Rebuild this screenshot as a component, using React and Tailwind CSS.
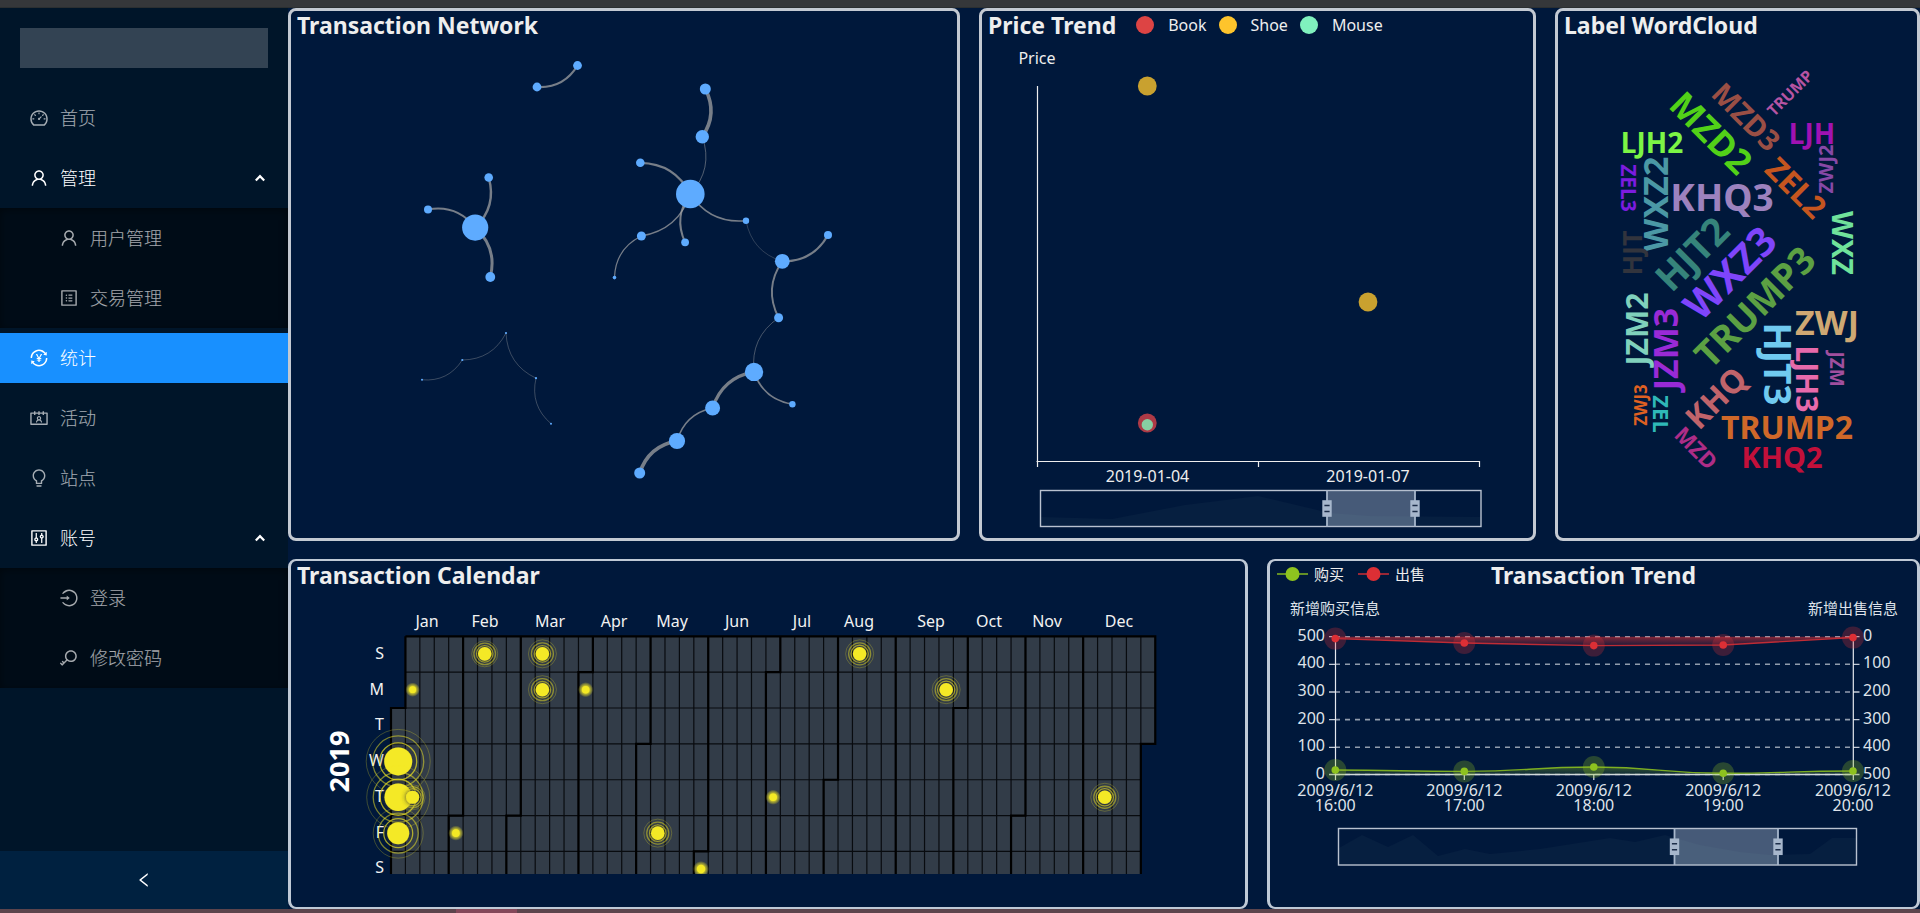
import React from "react";
import {
  AiOutlineDashboard,
  AiOutlineUser,
  AiOutlineProfile,
  AiOutlineTransaction,
  AiOutlineContacts,
  AiOutlineBulb,
  AiOutlineControl,
  AiOutlineLogin,
  AiOutlineKey,
  AiOutlineLeft,
} from "react-icons/ai";

/* ---------- Sidebar ---------- */

const MENU = [
  { label: "首页", icon: AiOutlineDashboard },
  {
    label: "管理",
    icon: AiOutlineUser,
    children: [
      { label: "用户管理", icon: AiOutlineUser },
      { label: "交易管理", icon: AiOutlineProfile },
    ],
  },
  { label: "统计", icon: AiOutlineTransaction, active: true },
  { label: "活动", icon: AiOutlineContacts },
  { label: "站点", icon: AiOutlineBulb },
  {
    label: "账号",
    icon: AiOutlineControl,
    children: [
      { label: "登录", icon: AiOutlineLogin },
      { label: "修改密码", icon: AiOutlineKey },
    ],
  },
];

function MenuLink({ item, nested }) {
  const Icon = item.icon;
  const tone = item.active ? "bg-[#1890ff] text-white" : "text-white/65";
  return (
    <a
      href="#"
      aria-current={item.active ? "page" : undefined}
      className={`my-[5px] flex h-[50px] items-center gap-[11px] ${nested ? "pl-[59px]" : "pl-[29px]"} ${tone}`}
    >
      <Icon className="size-5" />
      <span>{item.label}</span>
    </a>
  );
}

function SubMenu({ item }) {
  const Icon = item.icon;
  return (
    <>
      <button
        type="button"
        aria-expanded="true"
        className="flex h-[60px] w-full items-center gap-[11px] pr-[23px] pl-[29px] text-white"
      >
        <Icon className="size-5" />
        <span className="flex-1 text-left">{item.label}</span>
        <svg className="h-2 w-[10px]" viewBox="0 0 10 8" fill="none" stroke="currentColor" strokeWidth="2.2">
          <path d="M0.8 6.6 5 2.2 9.2 6.6" />
        </svg>
      </button>
      <ul className="bg-[#000c17] shadow-[inset_0_2px_8px_rgba(0,0,0,0.45)]">
        {item.children.map((c) => (
          <li key={c.label} className="flow-root">
            <MenuLink item={c} nested />
          </li>
        ))}
      </ul>
    </>
  );
}

function Sidebar() {
  return (
    <aside className="flex w-72 shrink-0 flex-col bg-[#001529]">
      <div className="m-5 h-10 bg-white/20" />
      <nav className="flex-1 text-lg font-light">
        <ul>
          {MENU.map((item) => (
            <li key={item.label} className="flow-root">
              {item.children ? <SubMenu item={item} /> : <MenuLink item={item} />}
            </li>
          ))}
        </ul>
      </nav>
      <button
        type="button"
        aria-label="Collapse menu"
        className="flex h-[58px] items-center justify-center bg-[#002140] text-white"
      >
        <AiOutlineLeft className="size-[18px]" />
      </button>
    </aside>
  );
}

/* ---------- Shared pieces ---------- */

function Title({ children }) {
  return <h2 className="text-[23px] leading-7 font-bold text-[#eeeeee]">{children}</h2>;
}

function Chart({ box, label, children }) {
  return (
    <svg className="block h-auto w-full" viewBox={box} role="img" aria-label={label}>
      {children}
    </svg>
  );
}

function ZoomBar({ x1, x2, from, to, top, bottom, area }) {
  const mid = (top + bottom) / 2;
  return (
    <g>
      <polygon points={area} fill="#061f40" />
      <rect x={x1} y={top} width={x2 - x1} height={bottom - top} fill="none" stroke="#b9c2d0" strokeWidth="1.4" />
      <rect x={from} y={top} width={to - from} height={bottom - top} fill="#a7b7cc" fillOpacity="0.42" />
      {[from, to].map((x) => (
        <g key={x}>
          <path d={`M${x} ${top}V${bottom}`} stroke="#a7b7cc" strokeWidth="1.8" />
          <rect x={x - 4.7} y={mid - 8.3} width="9.4" height="16.6" fill="#a7b7cc" />
          <path d={`M${x - 2.6} ${mid - 3}h5.2M${x - 2.6} ${mid + 3}h5.2`} stroke="#1c2d48" strokeWidth="1.3" />
        </g>
      ))}
    </g>
  );
}

/* ---------- Transaction Network ---------- */

const NODES = {
  a: [537, 87, 4.4], b: [577.5, 65.5, 4.4],
  c: [475.2, 227.6, 13.1], d: [428, 209.5, 4], e: [488.7, 177.5, 4.3], f: [490.3, 277, 4.9],
  g: [506, 333, 1.1], h: [462.3, 360, 1.1], i: [422, 379.8, 1], j: [536, 378.2, 1.1], k: [551, 423.7, 1],
  l: [705.3, 89, 5.5], m: [702.3, 136.7, 6.7], n: [640.3, 162.8, 4.3], o: [690.3, 194, 14.3],
  p: [746, 220.7, 3.2], q: [641.4, 236, 4.5], r: [685.1, 242.3, 3.9], s: [614.5, 277.6, 1.8],
  t: [828, 235, 4], u: [782.3, 261.3, 7.4], v: [778.6, 317.8, 4.5], w: [754, 371.9, 9.2],
  x: [792.4, 404.2, 3.2], y: [712.6, 408, 7.5], z: [677, 441, 8.1], aa: [639.7, 473, 5.5],
};

const LINKS = [
  ["b", "a", 2.2], ["d", "c", 2], ["e", "c", 2.4], ["c", "f", 3],
  ["g", "h", 0.5], ["h", "i", 0.5], ["j", "g", 0.5], ["k", "j", 0.5],
  ["l", "m", 3.6], ["m", "o", 0.7], ["n", "o", 2.2], ["p", "o", 1.5], ["o", "q", 1.3],
  ["r", "o", 2], ["s", "q", 1.2], ["u", "p", 0.4], ["t", "u", 2.2], ["v", "u", 1.9],
  ["w", "v", 0.6], ["x", "w", 1.7], ["y", "w", 3.2], ["z", "y", 1.6], ["aa", "z", 3.8],
];

function arc([x1, y1], [x2, y2]) {
  const cx = (x1 + x2) / 2 + (y2 - y1) * 0.3;
  const cy = (y1 + y2) / 2 - (x2 - x1) * 0.3;
  return `M${x1} ${y1}Q${cx} ${cy} ${x2} ${y2}`;
}

function NetworkChart() {
  return (
    <Chart box="291 41 666 497" label="Transaction Network">
      {LINKS.map(([s, t, w]) => (
        <path key={s + t} d={arc(NODES[s], NODES[t])} fill="none" stroke="#aaaaaa" strokeOpacity="0.7" strokeWidth={w} />
      ))}
      {Object.entries(NODES).map(([id, [x, y, r]]) => (
        <circle key={id} cx={x} cy={y} r={r} fill="#5eabff" />
      ))}
    </Chart>
  );
}

/* ---------- Price Trend ---------- */

const PRICE_LEGEND = [
  ["Book", "bg-[#dd4444]"],
  ["Shoe", "bg-[#fec42c]"],
  ["Mouse", "bg-[#80f1be]"],
];

function PriceChart() {
  return (
    <Chart box="982 41 551 497" label="Price Trend">
      <g fill="#eeeeee" fontSize="16" textAnchor="middle">
        <text x="1037" y="64">Price</text>
        <text x="1147.5" y="482">2019-01-04</text>
        <text x="1368" y="482">2019-01-07</text>
      </g>
      <path d="M1037.5 86V467M1036.5 461.5H1479.5V467M1258.5 461.5V467" fill="none" stroke="#eeeeee" strokeWidth="1.2" />
      <circle cx="1147.3" cy="86" r="9.4" fill="#c9a12f" />
      <circle cx="1368" cy="302" r="9.4" fill="#c9a12f" />
      <circle cx="1147.3" cy="423" r="9.4" fill="#ad3a46" />
      <circle cx="1147.3" cy="424.8" r="5.7" fill="#87cfa2" />
      <ZoomBar
        x1={1040.5}
        x2={1481}
        from={1327}
        to={1415}
        top={490.5}
        bottom={526.5}
        area="1041,517 1112,519 1185,505 1258,496 1330,513 1370,516 1481,517 1481,526 1041,526"
      />
    </Chart>
  );
}

/* ---------- Label WordCloud ---------- */

const WORDS = [
  ["MZD2", 1711, 133, 35, 45, "#52d118"],
  ["MZD3", 1746, 117, 29, 45, "#9a4f45"],
  ["TRUMP", 1790, 93, 16, -45, "#b654a2"],
  ["LJH", 1812, 134, 28, 0, "#a012b2"],
  ["ZWJ2", 1826, 169, 20, -90, "#8748a6"],
  ["ZEL2", 1796, 188, 31, 45, "#c5551f"],
  ["LJH2", 1652, 143, 28, 0, "#7cf545"],
  ["KHQ3", 1722, 198, 37, 0, "#9d82be"],
  ["WXZ2", 1656, 204, 34, -90, "#4b98a5"],
  ["ZEL3", 1628, 188, 21, 90, "#7c1ce0"],
  ["HJT2", 1692, 254, 38, -45, "#36847b"],
  ["WXZ3", 1730, 273, 40, -45, "#7f45fb"],
  ["TRUMP3", 1755, 307, 37, -45, "#5ca043"],
  ["WXZ", 1842, 243, 29, 90, "#70e29b"],
  ["HJT", 1632, 253, 27, -90, "#32343d"],
  ["JZM2", 1637, 329, 30, -90, "#80d1bc"],
  ["JZM3", 1666, 349, 34, -90, "#992ad6"],
  ["ZWJ", 1827, 323, 34, 0, "#cfa873"],
  ["HJT3", 1777, 364, 37, 90, "#70caf0"],
  ["LJH3", 1807, 379, 30, 90, "#e76aab"],
  ["JZM", 1837, 369, 19, 90, "#a14f9e"],
  ["ZWJ3", 1641, 405, 17, -90, "#de6022"],
  ["ZEL", 1661, 414, 22, 90, "#2fb8b8"],
  ["KHQ", 1716, 398, 32, -45, "#c0646b"],
  ["MZD", 1696, 448, 22, 45, "#ad2d87"],
  ["TRUMP2", 1787, 428, 32, 0, "#cf6829"],
  ["KHQ2", 1782, 458, 29, 0, "#c2103a"],
];

function WordCloud() {
  return (
    <Chart box="1558 41 359 497" label="Label WordCloud">
      {WORDS.map(([word, x, y, size, angle, color]) => (
        <text
          key={word}
          transform={`translate(${x} ${y}) rotate(${angle})`}
          dy="0.357em"
          fontSize={size}
          fontWeight="700"
          fill={color}
          textAnchor="middle"
        >
          {word}
        </text>
      ))}
    </Chart>
  );
}

/* ---------- Transaction Calendar ---------- */

const CAL = { left: 391, top: 636.3, w: 14.42, h: 35.86, bottom: 874 };
const colX = (c) => CAL.left + c * CAL.w;
const rowY = (r) => CAL.top + r * CAL.h;
const START_ROW = 2;
const MONTH_DAYS = [31, 28, 31, 30, 31, 30, 31, 31, 30, 31, 30, 31];
const MONTHS = [
  ["Jan", 427], ["Feb", 485], ["Mar", 550], ["Apr", 614], ["May", 672], ["Jun", 737],
  ["Jul", 802], ["Aug", 859], ["Sep", 931], ["Oct", 989], ["Nov", 1047], ["Dec", 1119],
];
const WEEKDAYS = ["S", "M", "T", "W", "T", "F", "S"];

/* [column, row, radius, ring radii] */
const DEALS = [
  [0, 3, 14, [18.5, 25.5, 32]],
  [0, 4, 13.7, [18, 25, 31.5]],
  [1, 4, 6.6, [8.5, 10.5, 12.5]],
  [0, 5, 11, [14.5, 20, 25]],
  [1, 1, 3.4, []],
  [6, 0, 6.8, [8.2, 10.8, 13]],
  [10, 0, 6.8, [8.2, 11, 14]],
  [10, 1, 6.8, [8.2, 11, 14]],
  [13, 1, 3.8, []],
  [4, 5, 3.8, []],
  [18, 5, 6.8, [8.2, 11, 14]],
  [21, 6, 4.2, []],
  [26, 4, 3.8, []],
  [32, 0, 6.8, [8.6, 11, 14]],
  [38, 1, 6.8, [8.6, 11, 14]],
  [49, 4, 6.8, [8.6, 11, 14]],
];

function monthLines() {
  const out = [];
  let day = START_ROW;
  MONTH_DAYS.forEach((n) => {
    const c = Math.floor(day / 7);
    const r = day % 7;
    out.push(
      r === 0
        ? `M${colX(c)} ${rowY(0)}V${rowY(7)}`
        : `M${colX(c)} ${rowY(7)}V${rowY(r)}H${colX(c + 1)}V${rowY(0)}`
    );
    day += n;
  });
  out.push(`M${colX(1)} ${rowY(0)}H${colX(53)}V${rowY(3)}H${colX(52)}V${rowY(7)}`);
  return out.join("");
}

function CalendarChart() {
  const outline = `M${colX(0)} ${rowY(2)}H${colX(1)}V${rowY(0)}H${colX(53)}V${rowY(3)}H${colX(52)}V${rowY(7)}H${colX(0)}Z`;
  return (
    <Chart box="291 591 954 316" label="Transaction Calendar">
      <defs>
        <clipPath id="cal-outline">
          <path d={outline} />
        </clipPath>
        <clipPath id="cal-canvas">
          <rect x="291" y="591" width="954" height={CAL.bottom - 591} />
        </clipPath>
        <filter id="dot-shadow" x="-60%" y="-60%" width="220%" height="220%">
          <feDropShadow dx="0" dy="0" stdDeviation="2.4" floodColor="#333333" floodOpacity="1" />
        </filter>
        <radialGradient id="dot-glow">
          <stop offset="0.4" stopColor="#f4e925" stopOpacity="0.9" />
          <stop offset="0.75" stopColor="#f4e925" stopOpacity="0.4" />
          <stop offset="1" stopColor="#f4e925" stopOpacity="0" />
        </radialGradient>
      </defs>
      <g clipPath="url(#cal-canvas)">
        <path d={outline} fill="#323c48" />
        <g clipPath="url(#cal-outline)" stroke="#080b0f" strokeWidth="1.2">
          {Array.from({ length: 53 }, (_, c) => (
            <path key={`c${c}`} d={`M${colX(c)} ${rowY(0)}V${rowY(7)}`} />
          ))}
          {Array.from({ length: 7 }, (_, r) => (
            <path key={`r${r}`} d={`M${colX(0)} ${rowY(r)}H${colX(53)}`} />
          ))}
        </g>
        <path d={monthLines()} fill="none" stroke="#000000" strokeWidth="2.2" />
      </g>
      <g fill="#f2f2f2" fontSize="16" textAnchor="middle">
        {MONTHS.map(([m, x]) => (
          <text key={m} x={x} y="627">{m}</text>
        ))}
      </g>
      <g fill="#f2f2f2" fontSize="16" textAnchor="end">
        {WEEKDAYS.map((d, i) => (
          <text key={i} x="384" y={659 + i * 35.7}>{d}</text>
        ))}
      </g>
      <text transform="translate(339 761.5) rotate(-90)" dy="0.357em" fontSize="27" fontWeight="700" fill="#ffffff" textAnchor="middle">
        2019
      </text>
      <g clipPath="url(#cal-canvas)">
        {DEALS.map(([c, r, size, rings]) => {
          const x = colX(c + 0.5);
          const y = rowY(r + 0.5) - 0.4;
          return (
            <g key={`${c}-${r}`}>
              {rings.map((ring, i) => (
                <circle
                  key={ring}
                  cx={x}
                  cy={y}
                  r={ring}
                  fill="none"
                  stroke="#f4e925"
                  strokeWidth={i === 2 ? 1 : 1.3}
                  strokeOpacity={[0.7, 0.5, 0.25][i]}
                />
              ))}
              {rings.length === 0 && <circle cx={x} cy={y} r={size + 3.8} fill="url(#dot-glow)" />}
              <circle cx={x} cy={y} r={size} fill="#f4e925" filter={size > 5 ? "url(#dot-shadow)" : undefined} />
            </g>
          );
        })}
      </g>
    </Chart>
  );
}

/* ---------- Transaction Trend ---------- */

const TREND_X = [1335.3, 1464.3, 1593.8, 1723.2, 1853];
const SELL_Y = [638.6, 643, 645.6, 645, 637.6];
const BUY_Y = [770, 771.4, 767, 773.3, 771];
const GRID_Y = [636.7, 664.3, 692, 719.6, 747.3, 774.5];
const HOURS = ["16:00", "17:00", "18:00", "19:00", "20:00"];

function smooth(xs, ys) {
  let d = `M${xs[0]} ${ys[0]}`;
  for (let i = 1; i < xs.length; i++) {
    const m = (xs[i - 1] + xs[i]) / 2;
    d += `C${m} ${ys[i - 1]} ${m} ${ys[i]} ${xs[i]} ${ys[i]}`;
  }
  return d;
}

function Series({ ys, color, base, area, curved }) {
  const line = curved
    ? smooth(TREND_X, ys)
    : "M" + TREND_X.map((x, i) => `${x} ${ys[i]}`).join("L");
  return (
    <g>
      <path d={`${line}V${base}H${TREND_X[0]}Z`} fill={area} />
      <path d={line} fill="none" stroke={color} strokeWidth="1.4" strokeOpacity="0.85" />
      {TREND_X.map((x, i) => (
        <g key={x} fill={color}>
          <circle cx={x} cy={ys[i]} r="11" fillOpacity="0.28" />
          <circle cx={x} cy={ys[i]} r="3.8" />
        </g>
      ))}
    </g>
  );
}

function TrendChart() {
  return (
    <Chart box="1270 591 647 316" label="Transaction Trend">
      <defs>
        <linearGradient id="sell-area" x1="0" y1="0" x2="0" y2="1">
          <stop offset="0" stopColor="#dc2f35" stopOpacity="0.6" />
          <stop offset="1" stopColor="#dc2f35" stopOpacity="0.12" />
        </linearGradient>
        <linearGradient id="buy-area" x1="0" y1="0" x2="0" y2="1">
          <stop offset="0" stopColor="#8ec31f" stopOpacity="0.35" />
          <stop offset="1" stopColor="#8ec31f" stopOpacity="0.1" />
        </linearGradient>
      </defs>
      <g fill="#dfe3ea" fontSize="15" textAnchor="middle">
        <text x="1335" y="614">新增购买信息</text>
        <text x="1853" y="614">新增出售信息</text>
      </g>
      <g fill="#dfe3ea" fontSize="16" textAnchor="middle">
        {TREND_X.map((x, i) => (
          <text key={x} y="796">
            <tspan x={x}>2009/6/12</tspan>
            <tspan x={x} dy="15">{HOURS[i]}</tspan>
          </text>
        ))}
      </g>
      <g fill="#dfe3ea" fontSize="16">
        {GRID_Y.map((y, i) => (
          <g key={y}>
            <text x="1325" y={y + 4} textAnchor="end">{500 - i * 100}</text>
            <text x="1863" y={y + 4}>{i * 100}</text>
          </g>
        ))}
      </g>
      {GRID_Y.map((y) => (
        <g key={y} fill="none" stroke="#c3cad6">
          <path d={`M1335 ${y}H1853`} strokeWidth="1.6" strokeDasharray="5 5" strokeOpacity="0.75" />
          <path d={`M1329 ${y}h6.5M1853 ${y}h6.5`} strokeWidth="1.3" />
        </g>
      ))}
      <path d="M1335 774.5H1853" stroke="#d5dbe4" strokeWidth="1.3" />
      <path d="M1335.5 637V780M1853.3 637V780" stroke="#e4e8ee" strokeWidth="1.2" />
      {TREND_X.slice(1, 4).map((x) => (
        <path key={x} d={`M${x} 774V780`} stroke="#e4e8ee" strokeWidth="1.2" />
      ))}
      <Series ys={SELL_Y} color="#dc2f35" base={636.7} area="url(#sell-area)" />
      <Series ys={BUY_Y} color="#8ec31f" base={774.5} area="url(#buy-area)" curved />
      <ZoomBar
        x1={1338.5}
        x2={1856.5}
        from={1674.5}
        to={1778}
        top={828.5}
        bottom={865}
        area="1339,848 1362,835 1388,847 1413,835 1438,856 1465,849 1490,854 1540,849 1610,838 1635,842 1665,835 1700,845 1740,852 1770,855 1810,854 1832,838 1856,838 1856,864 1339,864"
      />
    </Chart>
  );
}

function TrendLegendItem({ label, color }) {
  return (
    <button type="button" className="flex items-center gap-1.5">
      <svg className={`h-[14px] w-[31px] ${color}`} viewBox="0 0 31 14" fill="currentColor">
        <path d="M0 7H31" stroke="currentColor" strokeWidth="1.4" />
        <circle cx="15.5" cy="7" r="7" />
      </svg>
      <span>{label}</span>
    </button>
  );
}

/* ---------- Page ---------- */

export default function App() {
  return (
    <div className="flex min-h-screen flex-col bg-[#00183b] font-['Noto_Sans','Noto_Sans_CJK_SC',sans-serif] text-[#eeeeee]">
      <div className="h-2 border-b border-[#2b2f31] bg-[#35373a]" />
      <div className="flex flex-1">
        <Sidebar />
        <main className="flex min-w-0 flex-1 flex-col gap-[18px]">
          <div className="grid grid-cols-[672fr_557fr_365fr] gap-[19px]">
            <section className="rounded-lg border-3 border-[#c3c9d2]">
              <header className="px-1.5 pb-0.5">
                <Title>Transaction Network</Title>
              </header>
              <NetworkChart />
            </section>
            <section className="rounded-lg border-3 border-[#c3c9d2]">
              <header className="flex items-start gap-5 px-1.5 pb-0.5">
                <Title>Price Trend</Title>
                <div className="flex gap-3 text-base leading-7">
                  {PRICE_LEGEND.map(([name, color]) => (
                    <button key={name} type="button" className="flex items-center gap-3.5">
                      <span className={`size-[18px] rounded-full ${color}`} />
                      <span>{name}</span>
                    </button>
                  ))}
                </div>
              </header>
              <PriceChart />
            </section>
            <section className="rounded-lg border-3 border-[#c3c9d2]">
              <header className="px-1.5 pb-0.5">
                <Title>Label WordCloud</Title>
              </header>
              <WordCloud />
            </section>
          </div>
          <div className="grid grid-cols-[960fr_653fr] gap-[19px]">
            <section className="rounded-lg border-x-3 border-y-2 border-[#bfc9d6]">
              <header className="px-1.5 pb-0.5">
                <Title>Transaction Calendar</Title>
              </header>
              <CalendarChart />
            </section>
            <section className="rounded-lg border-x-3 border-y-2 border-[#bfc9d6]">
              <header className="grid grid-cols-[1fr_auto_1fr] items-start px-[7px] pb-0.5">
                <div className="flex gap-3.5 text-[15px] leading-[26px]">
                  <TrendLegendItem label="购买" color="text-[#8ec31f]" />
                  <TrendLegendItem label="出售" color="text-[#dc2f35]" />
                </div>
                <Title>Transaction Trend</Title>
              </header>
              <TrendChart />
            </section>
          </div>
        </main>
      </div>
      <div className="flex h-1 bg-[#5c444c]">
        <div className="ml-[456px] w-[61px] bg-[#84485a]" />
      </div>
    </div>
  );
}
